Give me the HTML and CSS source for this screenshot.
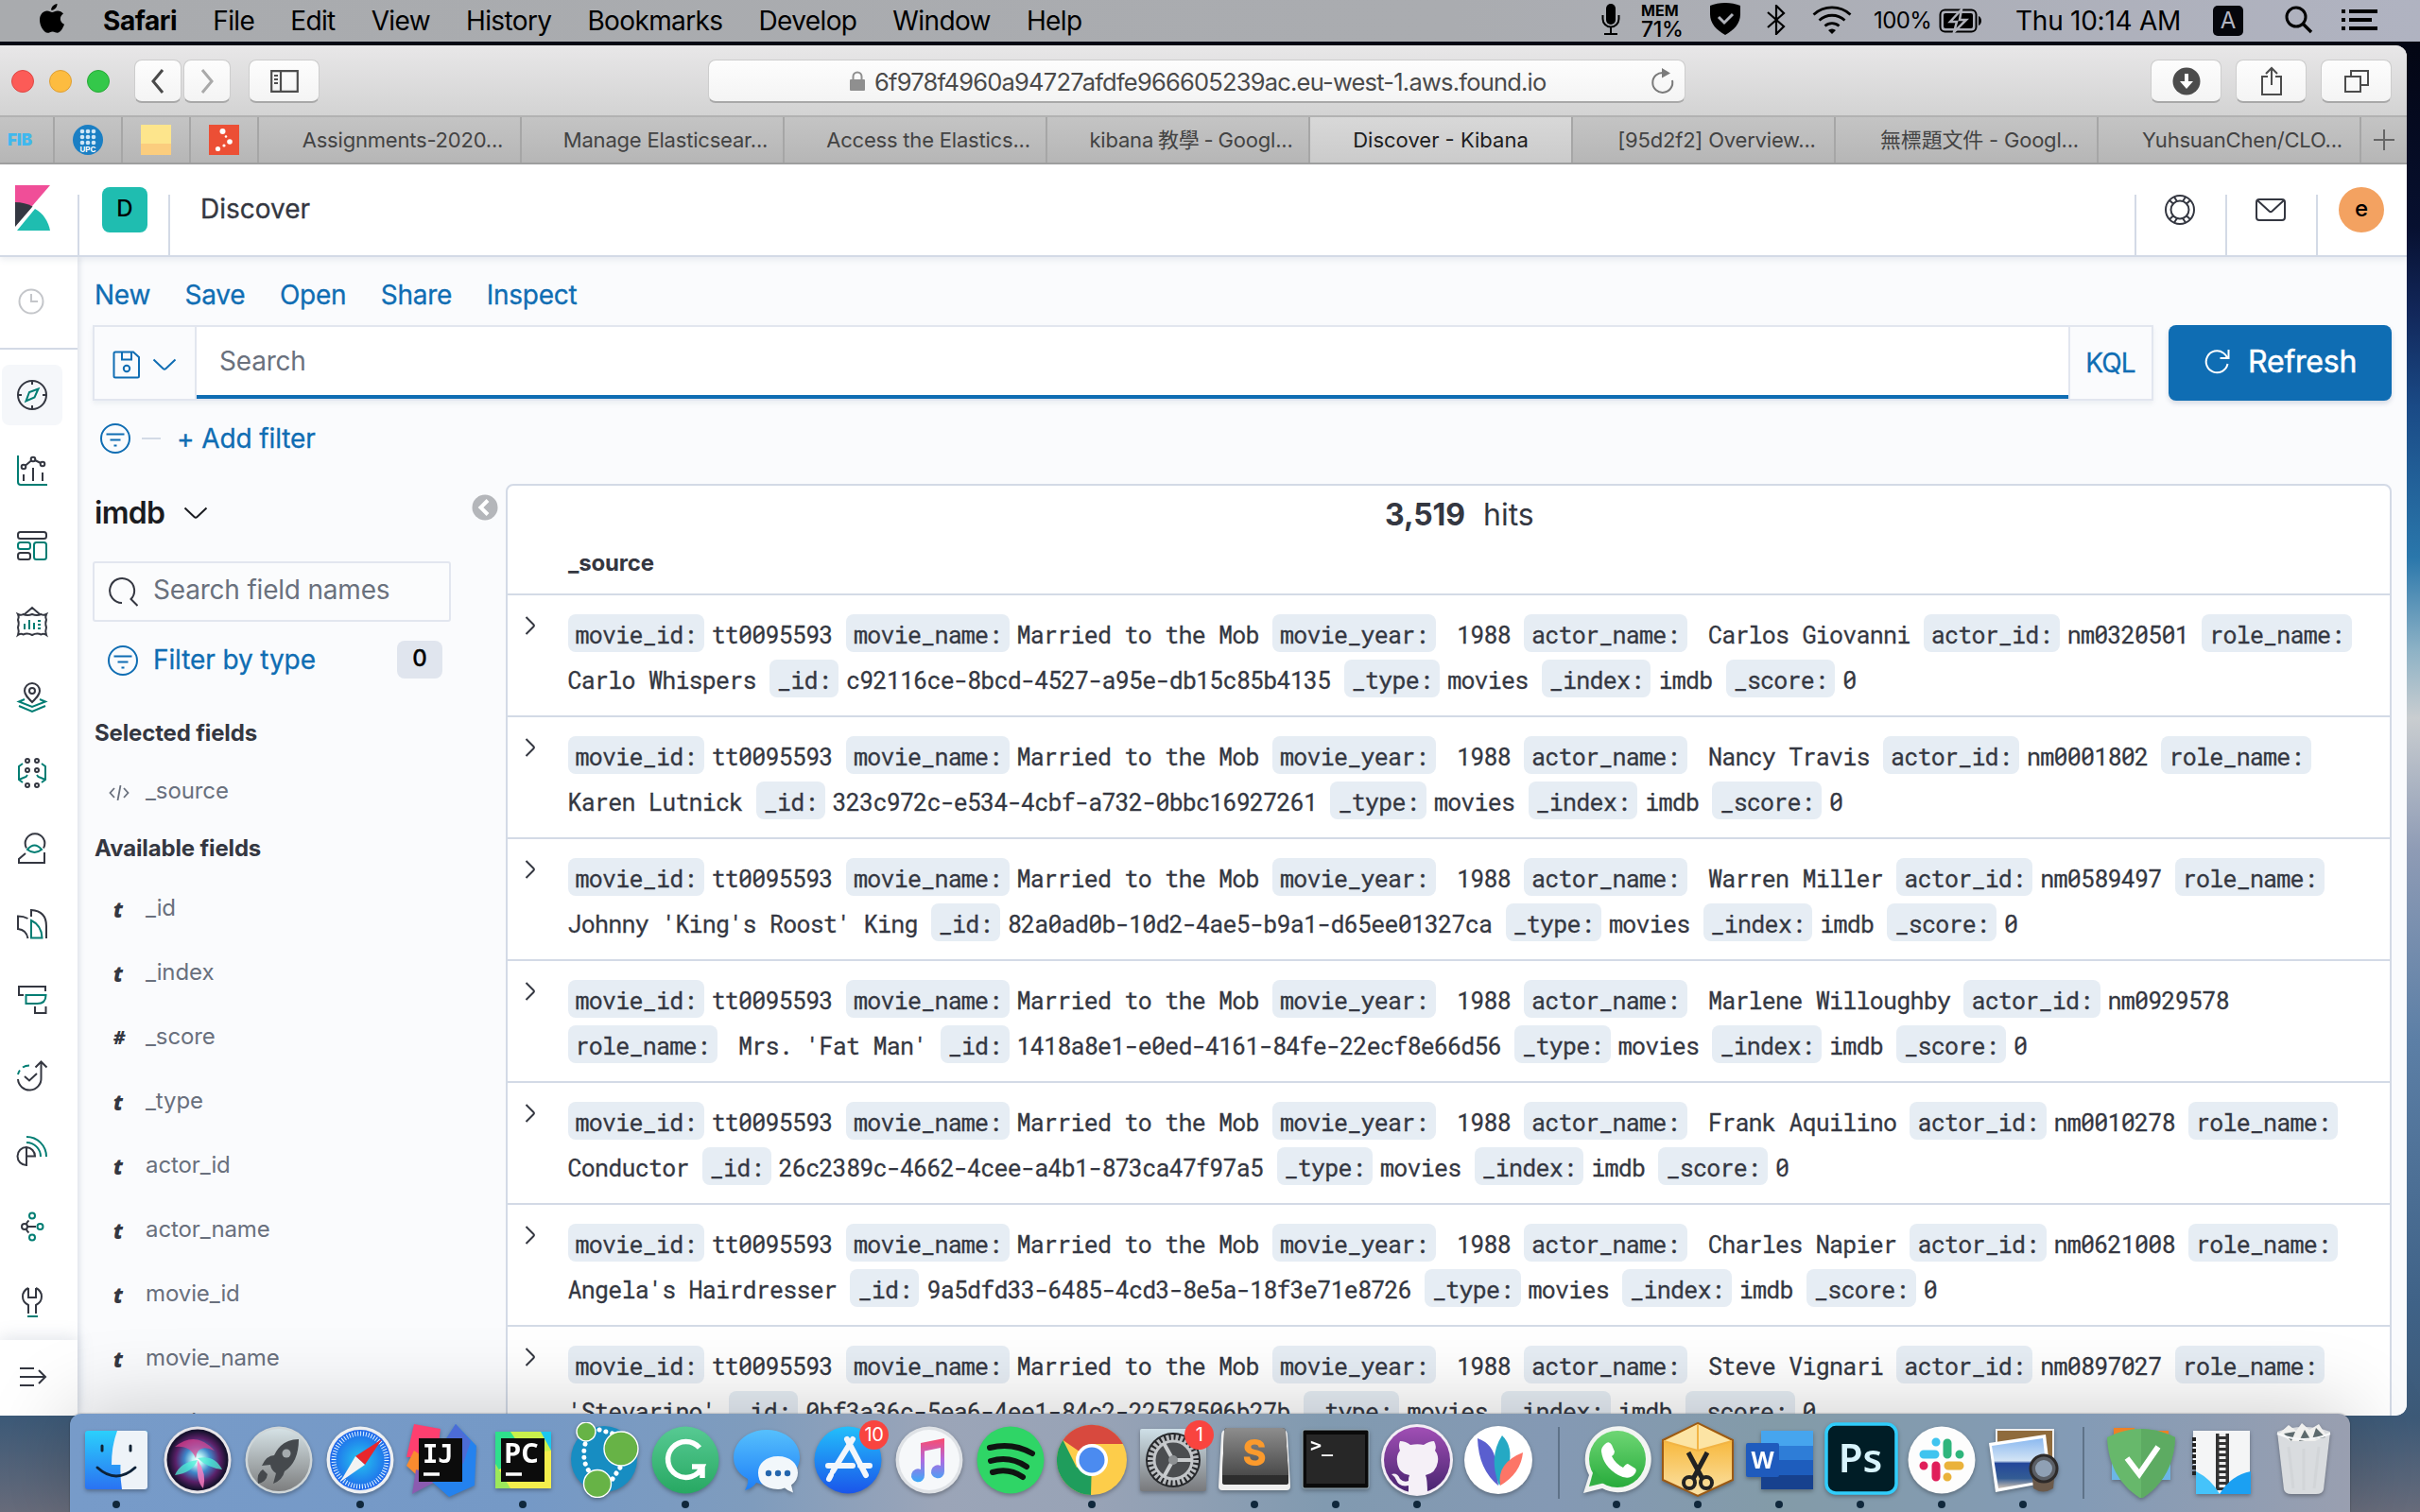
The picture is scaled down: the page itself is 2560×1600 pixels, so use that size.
FILE: index.html
```html
<!DOCTYPE html>
<html lang="en">
<head>
<meta charset="utf-8">
<title>Discover - Kibana</title>
<link rel="stylesheet" href="styles.css">
</head>
<body>
<svg width="0" height="0" class="defs">
  <defs>
    <symbol id="filter" viewBox="0 0 32 32"><g fill="none" stroke="currentColor" stroke-width="2"><circle cx="16" cy="16" r="15"/><path d="M6.500 11.500h19M10.500 17.500h11M14.500 23.500h3"/></g></symbol>
    <symbol id="down" viewBox="0 0 26 14"><path d="M1.500 1.500l10 9.500q1.500 1.200 3 0l10-9.500" fill="none" stroke="currentColor" stroke-width="2"/></symbol>
    <symbol id="right" viewBox="0 0 12 20"><path d="M1.500 1l8 8q1 1 0 2l-8 8" fill="none" stroke="currentColor" stroke-width="2"/></symbol>
    <linearGradient id="gFinder" x2="0" y2="1"><stop stop-color="#2bd0fc"/><stop offset="1" stop-color="#2a72f2"/></linearGradient>
    <radialGradient id="gSiri"><stop stop-color="#fff"/><stop offset=".18" stop-color="#b9f3f5"/><stop offset=".45" stop-color="#3f86c9"/><stop offset=".75" stop-color="#5a2068"/><stop offset="1" stop-color="#17122e"/></radialGradient>
    <linearGradient id="gRocket" x2="0" y2="1"><stop stop-color="#d5e1e5"/><stop offset="1" stop-color="#7d7e7f"/></linearGradient>
    <radialGradient id="gSafari"><stop stop-color="#25c6f0"/><stop offset="1" stop-color="#1f66ea"/></radialGradient>
    <linearGradient id="gGreen" x2="0" y2="1"><stop stop-color="#57ca93"/><stop offset="1" stop-color="#27a862"/></linearGradient>
    <linearGradient id="gMsg" x2="0" y2="1"><stop stop-color="#56c0fd"/><stop offset="1" stop-color="#1e7ff7"/></linearGradient>
    <linearGradient id="gStore" x2="0" y2="1"><stop stop-color="#23bffb"/><stop offset="1" stop-color="#1a55ea"/></linearGradient>
    <linearGradient id="gNote" x2="0" y2="1"><stop stop-color="#fb4a6c"/><stop offset=".5" stop-color="#b06ae0"/><stop offset="1" stop-color="#3aaaf8"/></linearGradient>
    <linearGradient id="gSteel" x2="0" y2="1"><stop stop-color="#cfe0e8"/><stop offset="1" stop-color="#78797c"/></linearGradient>
    <linearGradient id="gSub" x2="0" y2="1"><stop stop-color="#8d8d8d"/><stop offset="1" stop-color="#4b4b4b"/></linearGradient>
    <linearGradient id="gHub" x2="0" y2="1"><stop stop-color="#a14fb5"/><stop offset="1" stop-color="#47246f"/></linearGradient>
    <linearGradient id="gWa" x2="0" y2="1"><stop stop-color="#6ed674"/><stop offset="1" stop-color="#27ab3b"/></linearGradient>
    <linearGradient id="gBox" x2="0" y2="1"><stop stop-color="#f6ab1c"/><stop offset="1" stop-color="#fbe3a8"/></linearGradient>
    <linearGradient id="gSea" x2="0" y2="1"><stop stop-color="#8bb9f0"/><stop offset=".45" stop-color="#d3e4f5"/><stop offset=".5" stop-color="#24479a"/><stop offset=".8" stop-color="#335c94"/><stop offset="1" stop-color="#cfc2b5"/></linearGradient>
  </defs>
</svg>

<header class="menubar">
  <svg class="apple" width="28" height="32" viewBox="0 0 28 32"><path d="M19.500 0c.3 3.500-3 7-6.300 6.800C12.800 3.500 16.200.3 19.500 0zM14.200 9c1.500 0 3.300-1.600 6-1.500 2 .1 4.300 1 5.800 3-4.700 2.900-3.900 9.300 1 11.300-1 2.900-3.700 8.700-7 8.900-2 .1-3-1.300-5.400-1.300S11.200 30.800 9.400 30.800C5.400 30.700 1 23.300 1 17.200c0-6 3.900-9.500 7.800-9.600 2.300 0 4 1.400 5.400 1.400z"/></svg>
  <b class="app">Safari</b><span>File</span><span>Edit</span><span>View</span><span>History</span><span>Bookmarks</span><span>Develop</span><span>Window</span><span>Help</span>
  <div class="status">
    <svg width="20" height="34" viewBox="0 0 20 34"><rect x="5" y="0" width="10" height="22" rx="5"/><path d="M1.500 12v4a8.500 8.500 0 0 0 17 0v-4M10 25v6M3 32h14" fill="none" stroke="#000" stroke-width="2"/></svg>
    <div class="mem"><b>MEM</b><i>71%</i></div>
    <svg class="s-shield" width="34" height="34" viewBox="0 0 34 34"><path d="M17 0c6 0 11 1 16 3v9c0 10-7 17-16 22C8 29 1 22 1 12V3c5-2 10-3 16-3z"/><path d="M10 15l6 6 9-9" fill="none" stroke="#b0b2ba" stroke-width="3"/></svg>
    <svg class="s-bt" width="20" height="32" viewBox="0 0 20 32"><path d="M1 8l17 15-8 8V1l8 8L1 24" fill="none" stroke="#000" stroke-width="2.200"/></svg>
    <svg class="s-wifi" width="42" height="30" viewBox="0 0 42 30"><path d="M1.500 9.500a29 29 0 0 1 39 0M7.500 15.500a20 20 0 0 1 27 0M13.500 21.500a11 11 0 0 1 15 0" fill="none" stroke="#000" stroke-width="2.800"/><path d="M17 26a6 6 0 0 1 8 0l-4 4z"/></svg>
    <span class="s-pct">100%</span>
    <svg class="s-bat" width="46" height="26" viewBox="0 0 46 26"><rect x="1.500" y="1.500" width="38" height="23" rx="5" fill="none" stroke="#000" stroke-width="2"/><rect x="5" y="5" width="31" height="16" rx="2"/><path d="M42 8c4 1.500 4 8.500 0 10z"/><path d="M24 1L12 14h7l-3 11 13-13h-7z" stroke="#b0b2ba" stroke-width="2.500"/></svg>
    <span class="s-time">Thu 10:14 AM</span>
    <span class="s-input">A</span>
    <svg class="s-find" width="30" height="30" viewBox="0 0 30 30"><circle cx="12" cy="12" r="10" fill="none" stroke="#000" stroke-width="3"/><path d="M19 19l9 9" stroke="#000" stroke-width="3.400"/></svg>
    <svg class="s-list" width="38" height="22" viewBox="0 0 38 22"><path d="M0 2h4M8 2h30M0 11h4M8 11h24M0 20h4M8 20h30" stroke="#000" stroke-width="3.800"/></svg>
  </div>
</header>

<main class="window">
  <div class="toolbar">
    <i class="light red"></i><i class="light amber"></i><i class="light green"></i>
    <span class="btn back"><svg width="16" height="28" viewBox="0 0 16 28"><path d="M13 2L3 14l10 12" fill="none" stroke="#4a4a4a" stroke-width="3"/></svg></span>
    <span class="btn fwd"><svg width="16" height="28" viewBox="0 0 16 28"><path d="M3 2l10 12L3 26" fill="none" stroke="#a9a9a9" stroke-width="3"/></svg></span>
    <span class="btn side"><svg width="30" height="24" viewBox="0 0 30 24"><path d="M1.200 1.200h27.600v21.600H1.200zM11 1v22M4 6h4M4 10h4M4 14h4" fill="none" stroke="#4d4d4d" stroke-width="2.200"/></svg></span>
    <div class="url">
      <svg class="lock" width="18" height="22" viewBox="0 0 18 22"><rect x="1" y="9" width="16" height="12" rx="1" fill="#8f8f8f"/><path d="M4.500 10V6a4.500 4.500 0 0 1 9 0v4" fill="none" stroke="#8f8f8f" stroke-width="2"/></svg>
      <span class="addr">6f978f4960a94727afdfe966605239ac.eu-west-1.aws.found.io</span>
      <svg class="reload" width="26" height="28" viewBox="0 0 26 28"><path d="M23 13a10.500 10.500 0 1 1-9-8" fill="none" stroke="#7a7a7a" stroke-width="2"/><path d="M12 0l9 5.500-9 5z" fill="#7a7a7a"/></svg>
    </div>
    <span class="btn dl"><svg width="30" height="30" viewBox="0 0 30 30"><circle cx="15" cy="15" r="14.500" fill="#4c4c4c"/><path d="M13 7h4v8h5l-7 8-7-8h5z" fill="#fff"/></svg></span>
    <span class="btn"><svg width="24" height="32" viewBox="0 0 24 32"><path d="M8 11H2v19h20V11h-6M12 20V3M6 8l6-6 6 6" fill="none" stroke="#4c4c4c" stroke-width="2"/></svg></span>
    <span class="btn"><svg width="28" height="26" viewBox="0 0 28 26"><path d="M2 8h16v16H2zM8 8V2h18v15h-8" fill="none" stroke="#4c4c4c" stroke-width="2"/></svg></span>
  </div>

  <div class="tabs">
    <span class="pin p1">FIB</span>
    <span class="pin"><svg width="32" height="32" viewBox="0 0 32 32"><circle cx="16" cy="16" r="16" fill="#1b7fc4"/><g fill="#cfe6f6"><circle cx="10" cy="7" r="2.300"/><circle cx="16" cy="7" r="2.300"/><circle cx="22" cy="7" r="2.300"/><circle cx="10" cy="13" r="2.300"/><circle cx="16" cy="13" r="2.300"/><circle cx="22" cy="13" r="2.300"/><circle cx="10" cy="19" r="2.300"/><circle cx="16" cy="19" r="2.300"/><circle cx="22" cy="19" r="2.300"/></g><text x="16" y="29" class="upc">UPC</text></svg></span>
    <span class="pin"><svg width="32" height="32" viewBox="0 0 32 32"><path fill="#fde58c" d="M0 0h32v20H0z"/><path fill="#fbcd7e" d="M0 20h32v12H0z"/></svg></span>
    <span class="pin"><svg width="32" height="32" viewBox="0 0 32 32"><path fill="#ec4f35" d="M0 0h32v32H0z"/><g fill="#fff"><circle cx="14.500" cy="7" r="3"/><circle cx="18" cy="12.500" r="1.300"/><circle cx="22" cy="18" r="2.800"/><circle cx="16" cy="22" r="1.600"/><circle cx="9.500" cy="25.500" r="2.600"/></g></svg></span>
    <span class="tab">Assignments-2020...</span><span class="tab">Manage Elasticsear...</span><span class="tab">Access the Elastics...</span><span class="tab cjk">kibana 教學 - Googl...</span><span class="tab on">Discover - Kibana</span><span class="tab">[95d2f2] Overview...</span><span class="tab">無標題文件 - Googl...</span><span class="tab">YuhsuanChen/CLO...</span>
    <span class="plus"><svg width="22" height="22" viewBox="0 0 22 22"><path d="M11 0v22M0 11h22" stroke="#666" stroke-width="2"/></svg></span>
  </div>

  <div class="khead">
    <div class="logo"><svg width="38" height="48" viewBox="0 0 38 48"><path d="M0 0h37L0 43z" fill="#f04e98"/><path d="M0 18c7 0 13 1.500 18.500 4.500L0 44z" fill="#343741"/><path d="M21 25C30 30 35 38 37 48H2z" fill="#1fbdb0"/></svg></div>
    <div class="space"><span>D</span></div>
    <div class="crumb">Discover</div>
    <div class="hicon"><svg width="32" height="32" viewBox="0 0 32 32" fill="none" stroke="#343741" stroke-width="2"><circle cx="16" cy="16" r="15"/><circle cx="16" cy="16" r="9.500"/><path d="M10 2.500l3 4.500M5 6l4.500 4M22 2.500L19 7M27 6l-4.500 4M10 29.500l3-4.500M5 26l4.500-4M22 29.500L19 25M27 26l-4.500-4"/></svg></div>
    <div class="hicon"><svg width="32" height="24" viewBox="0 0 32 24" fill="none" stroke="#343741" stroke-width="2"><rect x="1" y="1" width="30" height="22" rx="3"/><path d="M2 2l12.500 11.500q1.500 1.300 3 0L30 2"/></svg></div>
    <div class="hicon user"><span>e</span></div>
  </div>

  <div class="app-body">
    <nav class="rail">
      <div class="recent"><svg width="28" height="28" viewBox="0 0 28 28" fill="none" stroke="#c4c6ca" stroke-width="2"><circle cx="14" cy="14" r="12.500"/><path d="M14 6v8h7"/></svg></div>
      <div class="links">
        <span class="on"><svg viewBox="0 0 32 32"><circle cx="16" cy="16" r="15"/><path d="M16 1v4M16 27v4M1 16h4M27 16h4"/><path class="t" d="M22.500 9.500l-4 9-9 4 3.500-9.500z"/></svg></span>
        <span><svg viewBox="0 0 32 32"><path class="t" d="M1 0v28q0 3 3 3h28"/><circle cx="7" cy="12" r="2.300"/><circle cx="17" cy="4" r="2.300"/><circle cx="27" cy="9" r="2.300"/><path d="M9 10.500l6-5M19 5l6 3M7 20v7M17 13v14M27 18v9"/></svg></span>
        <span><svg viewBox="0 0 32 32"><rect x="1" y="1" width="30" height="7" rx="2.500"/><rect class="t" x="1" y="12" width="13" height="7" rx="2.500"/><rect class="t" x="18" y="12" width="13" height="18" rx="2.500"/><rect x="1" y="23" width="13" height="7" rx="2.500"/></svg></span>
        <span><svg viewBox="0 0 32 32"><path d="M8 8l8-7 8 7M1 8q3 1.500 5.500 0 4.500 2 9.500 0 5 2 9.500 0Q28 9.500 31 8q-1.500 3 0 6-1.500 3 0 8-1.500 4 0 8-3-2-5.500-.5-4.500-2-9.500.5-5-2.500-9.500-.5Q4 28 1 30q1.500-4 0-8 1.500-5 0-8 1.500-3 0-6z"/><path class="t" d="M8 18v6M13 14v10M18 17v7M22 15h3M22 19h3M22 23h3"/></svg></span>
        <span><svg viewBox="0 0 32 32"><path d="M16 21C11 16 8 13 8 9a8 8 0 0 1 16 0c0 4-3 7-8 12z"/><circle cx="16" cy="9" r="3"/><path class="t" d="M8 18l-6 2.500L16 26l14-5.500-6-2.500M2 25l14 6 14-6"/></svg></span>
        <span><svg viewBox="0 0 32 32"><g><circle cx="11" cy="3" r="2"/><circle cx="21" cy="3" r="2"/><circle cx="11" cy="13" r="2"/><circle cx="21" cy="13" r="2"/><circle cx="11" cy="29" r="2"/><circle cx="21" cy="29" r="2"/></g><path class="t" d="M6 6L2 9v14l4 3M26 6l4 3v14l-4 3M2 23l7.500-3 1.500-2M30 23l-7.500-3-1.500-2"/></svg></span>
        <span><svg viewBox="0 0 32 32"><path d="M10 15.500A10.300 10.300 0 1 1 28 15.500M9 21l-7 6v4h27V20"/><path class="t" d="M11 17q7.500-9 15 0-7.500 6-15 0z"/></svg></span>
        <span><svg viewBox="0 0 32 32"><path d="M11.500 10Q7 7.500 1 7.500V21q9 1 10.500 10M15 8V1q16 1 16 17v13"/><path class="t" d="M15 12v18.500h11.500Q26 17 15 12z"/></svg></span>
        <span><svg viewBox="0 0 32 32"><path d="M7 11H2V2h28v5M19 23v7h11.500v-7"/><path class="t" d="M9.500 11h21q0 9-9 9h-12z"/></svg></span>
        <span><svg viewBox="0 0 32 32"><path d="M1 20a12.200 12.200 0 0 0 24.500-1.500V2M19.500 7.500l6-6 6 6M8 17l5 4.500 8-7.500"/><path class="t" d="M1 15q.5-2.500 2-4.500M6 7.500Q9 5.500 13 5.500"/></svg></span>
        <span><svg viewBox="0 0 32 32"><path d="M10 12a9.500 9.500 0 1 0 0 19V12a9.500 9.500 0 0 1 9 9.500H10"/><path class="t" d="M10 1a21 21 0 0 1 21 21M10 7a15 15 0 0 1 15 15"/></svg></span>
        <span><svg viewBox="0 0 32 32"><circle cx="8" cy="16" r="3"/><path d="M11 16h9M10 13.500q0-2 2.500-4M10 18.500q0 2 2.500 4"/><g class="t"><circle cx="16" cy="4.500" r="3"/><circle cx="24.500" cy="16" r="3"/><circle cx="16" cy="27.500" r="3"/></g></svg></span>
        <span><svg viewBox="0 0 32 32"><path d="M12 1Q6 4 6 10t6 9v9M20 1q6 3 6 9t-6 9v9M12 1v10h8V1"/><path class="t" d="M11 31h11"/></svg></span>
      </div>
      <div class="expand"><svg width="30" height="20" viewBox="0 0 30 20" fill="none" stroke="#343741" stroke-width="2"><path d="M1 1h15M1 10h27M1 19h15M21 3l7 7-7 7"/></svg></div>
    </nav>

    <section class="discover">
      <div class="actions"><span>New</span><span>Save</span><span>Open</span><span>Share</span><span>Inspect</span></div>
      <div class="query">
        <div class="field">
          <div class="saved">
            <svg width="30" height="30" viewBox="0 0 30 30" fill="none" stroke="currentColor" stroke-width="2"><path d="M1.500 3q0-1.500 1.500-1.500h19l6 5.500v20q0 1.500-1.500 1.500H3q-1.500 0-1.500-1.500zM10 2v7.500h10V2"/><circle cx="15" cy="19" r="3.200"/></svg>
            <svg width="26" height="14"><use href="#down"/></svg>
          </div>
          <div class="input">Search</div>
          <div class="kql">KQL</div>
        </div>
        <div class="refresh"><svg width="28" height="28" viewBox="0 0 28 28" fill="none" stroke="#fff" stroke-width="2"><path d="M24.500 16A11.500 11.500 0 1 1 20 4.500q3 2 4.500 5.500M25.500 1v9h-9"/></svg>Refresh</div>
      </div>
      <div class="filters"><svg width="32" height="32"><use href="#filter"/></svg><i></i><span>+ Add filter</span></div>

      <div class="cols">
        <aside class="side-fields">
          <div class="index"><b>imdb</b><svg width="26" height="14"><use href="#down"/></svg><svg class="fold" width="28" height="28" viewBox="0 0 28 28"><circle cx="14" cy="14" r="13.500" fill="#b4b6ba"/><path d="M17 6.500L9.500 14l7.500 7.500" fill="none" stroke="#fff" stroke-width="4"/></svg></div>
          <div class="fsearch"><svg width="32" height="32" viewBox="0 0 32 32" fill="none" stroke="#343741" stroke-width="2"><path d="M15 28a13 13 0 1 1 9.500-4L31.500 31"/></svg>Search field names</div>
          <div class="ftype"><svg width="32" height="32"><use href="#filter"/></svg>Filter by type<span>0</span></div>
          <h3>Selected fields</h3>
          <div class="fld sel"><svg width="22" height="16" viewBox="0 0 22 16" fill="none" stroke="#69707d" stroke-width="1.800"><path d="M6 3L1.500 8 6 13M16 3l4.500 5L16 13M12.500 0l-3 16"/></svg>_source</div>
          <h3 class="avail">Available fields</h3>
          <div class="fld"><i>t</i>_id</div>
          <div class="fld"><i>t</i>_index</div>
          <div class="fld"><i class="num">#</i>_score</div>
          <div class="fld"><i>t</i>_type</div>
          <div class="fld"><i>t</i>actor_id</div>
          <div class="fld"><i>t</i>actor_name</div>
          <div class="fld"><i>t</i>movie_id</div>
          <div class="fld"><i>t</i>movie_name</div>
          <div class="fld"><i>t</i>movie_year</div>
        </aside>

        <div class="results">
          <div class="hits"><b>3,519</b> hits</div>
          <div class="thead">_source</div>
          <div class="row"><svg width="12" height="20"><use href="#right"/></svg><div class="doc">
<p><b>movie_id:</b>tt0095593 <b>movie_name:</b>Married to the Mob <b>movie_year:</b> 1988 <b>actor_name:</b> Carlos Giovanni <b>actor_id:</b>nm0320501 <b>role_name:</b></p>
<p>Carlo Whispers <b>_id:</b>c92116ce-8bcd-4527-a95e-db15c85b4135 <b>_type:</b>movies <b>_index:</b>imdb <b>_score:</b>0</p></div></div>
          <div class="row"><svg width="12" height="20"><use href="#right"/></svg><div class="doc">
<p><b>movie_id:</b>tt0095593 <b>movie_name:</b>Married to the Mob <b>movie_year:</b> 1988 <b>actor_name:</b> Nancy Travis <b>actor_id:</b>nm0001802 <b>role_name:</b></p>
<p>Karen Lutnick <b>_id:</b>323c972c-e534-4cbf-a732-0bbc16927261 <b>_type:</b>movies <b>_index:</b>imdb <b>_score:</b>0</p></div></div>
          <div class="row"><svg width="12" height="20"><use href="#right"/></svg><div class="doc">
<p><b>movie_id:</b>tt0095593 <b>movie_name:</b>Married to the Mob <b>movie_year:</b> 1988 <b>actor_name:</b> Warren Miller <b>actor_id:</b>nm0589497 <b>role_name:</b></p>
<p>Johnny 'King's Roost' King <b>_id:</b>82a0ad0b-10d2-4ae5-b9a1-d65ee01327ca <b>_type:</b>movies <b>_index:</b>imdb <b>_score:</b>0</p></div></div>
          <div class="row"><svg width="12" height="20"><use href="#right"/></svg><div class="doc">
<p><b>movie_id:</b>tt0095593 <b>movie_name:</b>Married to the Mob <b>movie_year:</b> 1988 <b>actor_name:</b> Marlene Willoughby <b>actor_id:</b>nm0929578</p>
<p><b>role_name:</b> Mrs. 'Fat Man' <b>_id:</b>1418a8e1-e0ed-4161-84fe-22ecf8e66d56 <b>_type:</b>movies <b>_index:</b>imdb <b>_score:</b>0</p></div></div>
          <div class="row"><svg width="12" height="20"><use href="#right"/></svg><div class="doc">
<p><b>movie_id:</b>tt0095593 <b>movie_name:</b>Married to the Mob <b>movie_year:</b> 1988 <b>actor_name:</b> Frank Aquilino <b>actor_id:</b>nm0010278 <b>role_name:</b></p>
<p>Conductor <b>_id:</b>26c2389c-4662-4cee-a4b1-873ca47f97a5 <b>_type:</b>movies <b>_index:</b>imdb <b>_score:</b>0</p></div></div>
          <div class="row"><svg width="12" height="20"><use href="#right"/></svg><div class="doc">
<p><b>movie_id:</b>tt0095593 <b>movie_name:</b>Married to the Mob <b>movie_year:</b> 1988 <b>actor_name:</b> Charles Napier <b>actor_id:</b>nm0621008 <b>role_name:</b></p>
<p>Angela's Hairdresser <b>_id:</b>9a5dfd33-6485-4cd3-8e5a-18f3e71e8726 <b>_type:</b>movies <b>_index:</b>imdb <b>_score:</b>0</p></div></div>
          <div class="row"><svg width="12" height="20"><use href="#right"/></svg><div class="doc">
<p><b>movie_id:</b>tt0095593 <b>movie_name:</b>Married to the Mob <b>movie_year:</b> 1988 <b>actor_name:</b> Steve Vignari <b>actor_id:</b>nm0897027 <b>role_name:</b></p>
<p>'Stevarino' <b>_id:</b>0bf3a36c-5ea6-4ee1-84c2-22578506b27b <b>_type:</b>movies <b>_index:</b>imdb <b>_score:</b>0</p></div></div>
        </div>
      </div>
    </section>
  </div>
</main>

<footer class="dock">
  <span class="run"><svg viewBox="0 0 86 80"><rect x="10" y="9" width="66" height="62" rx="3" fill="url(#gFinder)"/><path d="M44 9h29a3 3 0 0 1 3 3v56a3 3 0 0 1-3 3H49q-2-12-1.500-26H38Q38 25 44 9z" fill="#eef3f8"/><path d="M28 25v5M58 25v5" stroke="#123" stroke-width="3" stroke-linecap="round"/><path d="M23 48q20 18 40 0" fill="none" stroke="#0d2238" stroke-width="3" stroke-linecap="round"/></svg></span>
  <span><svg viewBox="0 0 86 80"><circle cx="43" cy="40" r="35.500" fill="#e8e6ea"/><circle cx="43" cy="40" r="32.500" fill="#17122e"/><circle cx="43" cy="40" r="31" fill="url(#gSiri)"/><path d="M19 26q22-18 42 4-18-8-20 8-6-14-22-12z" fill="#e0408f" opacity=".7"/><path d="M43 38q18-4 26 12-16-2-26-12zM43 40q-6 14-24 16 6-14 24-16z" fill="#4df0d6" opacity=".75"/><path d="M43 40q10 14 6 30-8-8-6-30z" fill="#ff7fc2" opacity=".8"/></svg></span>
  <span><svg viewBox="0 0 86 80"><circle cx="43" cy="40" r="35.500" fill="#cfd6d8"/><circle cx="43" cy="40" r="33" fill="url(#gRocket)"/><path d="M64 18q-18 0-26 17-8 0-13 11l9-1q1 6 6 9l-3 11q10-4 12-13 15-10 15-34zM26 50q-7 4-5 15 9-2 10-10z" fill="#45494d"/><circle cx="51" cy="33" r="4.500" fill="#a5abae"/></svg></span>
  <span class="run"><svg viewBox="0 0 86 80"><circle cx="43" cy="40" r="35.500" fill="#eef0f2"/><circle cx="43" cy="40" r="32" fill="url(#gSafari)"/><circle cx="43" cy="40" r="28" fill="none" stroke="#e5f4ff" stroke-width="5" stroke-dasharray="1 1.930"/><path d="M66 18L48 45l-10-9z" fill="#e8262c"/><path d="M22 63l16-27 10 9z" fill="#f3f3f3"/></svg></span>
  <span><svg viewBox="0 0 86 80"><path d="M14 2l28 5-4 30H6z" fill="#fe3f6f"/><path d="M6 46l8-16 20 14-14 15z" fill="#f98b2f"/><path d="M12 76l4-26 30 8z" fill="#8b5bb0"/><path d="M40 30L58 2l22 23-2 42-27 12-18-16z" fill="#2482ee"/><path d="M44 24L58 2l16 18-8 24z" fill="#4c6cd6"/><rect x="19" y="17" width="46" height="46" fill="#0c0c0c"/><text x="23" y="43" class="jb">IJ</text><path d="M24 55h17" stroke="#fff" stroke-width="3.500"/></svg></span>
  <span class="run"><svg viewBox="0 0 86 80"><rect x="14" y="10" width="59" height="60" fill="#2fe08c"/><path d="M30 10h43v20L50 40z" fill="#c9f04b"/><path d="M62 10h11v20z" fill="#1bc7f0"/><path d="M73 30v40H14V52l40-20z" fill="#f3ee4c"/><path d="M14 44v26h16z" fill="#9ce85a"/><rect x="20" y="17" width="46" height="46" fill="#0c0c0c"/><text x="23" y="43" class="jb pc">PC</text><path d="M25 55h17" stroke="#fff" stroke-width="3.500"/></svg></span>
  <span><svg viewBox="0 0 86 80"><circle cx="43" cy="39" r="35" fill="#178dc2"/><path d="M23 23q-5 22 9 34M38 8l14 4M52 60l8-12" stroke="#fff" stroke-width="5" stroke-linecap="round" stroke-dasharray=".1 7" fill="none"/><g fill="#67b346" stroke="#fff" stroke-width="1.400"><circle cx="24" cy="10" r="10"/><circle cx="61" cy="28" r="18"/><circle cx="36" cy="65" r="14.500"/></g></svg></span>
  <span class="run"><svg viewBox="0 0 86 80"><circle cx="43" cy="40" r="35.500" fill="url(#gGreen)"/><path d="M58 27a19 19 0 1 0 3 20H50M61 47v12" fill="none" stroke="#fff" stroke-width="5.500"/></svg></span>
  <span><svg viewBox="0 0 86 80"><path d="M43 8c20 0 35 13 35 29S63 66 43 66q-6 0-11-2-4 6-12 8 4-7 3-12Q8 52 8 37C8 21 23 8 43 8z" fill="url(#gMsg)"/><path d="M55 36c13 0 21 8 21 17.500q0 8-7 13l2 8q-6-2-9-5-4 1.500-7 1.500-21-1-21-17.500C34 44 42 36 55 36z" fill="#f2f7fb"/><g fill="#2566ad"><circle cx="45" cy="54" r="3.200"/><circle cx="55" cy="54" r="3.200"/><circle cx="65" cy="54" r="3.200"/></g></svg></span>
  <span><svg viewBox="0 0 86 80"><circle cx="43" cy="40" r="35.500" fill="url(#gStore)"/><path d="M42 18l20 38M48 18L27 52M22 46h26M56 46h10M25 56l-2 4" stroke="#f2f6fb" stroke-width="6" stroke-linecap="round"/></svg><em>10</em></span>
  <span><svg viewBox="0 0 86 80"><circle cx="43" cy="40" r="35.500" fill="#dfe2e6"/><circle cx="43" cy="40" r="32" fill="#f6f8fa"/><path d="M34 22l25-5v35a7 7 0 1 1-4-6V27l-17 3.500V56a7 7 0 1 1-4-6z" fill="url(#gNote)"/></svg></span>
  <span><svg viewBox="0 0 86 80"><circle cx="43" cy="40" r="35.500" fill="#2fd566"/><path d="M21 27q24-6 45 6M22 41q20-6 38 6M24 53q17-5 32 5" fill="none" stroke="#0f1411" stroke-width="6" stroke-linecap="round"/></svg></span>
  <span class="run"><svg viewBox="0 0 86 80"><circle cx="43" cy="40" r="37" fill="#fdcd4a"/><path d="M43 40L12.500 19A37 37 0 0 1 76 23H43z" fill="#d8493e"/><path d="M43 40l-1 37A37 37 0 0 1 12.500 19L27 48z" fill="#1f9d5c"/><path d="M43 23h33L60 46 42 77l17-29z" fill="#fdcd4a"/><circle cx="43" cy="40" r="17" fill="#fff"/><circle cx="43" cy="40" r="13.500" fill="#4b8bf0"/></svg></span>
  <span><svg viewBox="0 0 86 80"><rect x="8" y="7" width="70" height="66" rx="2" fill="url(#gSteel)"/><circle cx="43" cy="40" r="29" fill="#26282b"/><circle cx="43" cy="40" r="24" fill="none" stroke="#b9bcbf" stroke-width="6" stroke-dasharray="3 2"/><circle cx="43" cy="40" r="20" fill="#4b4d50" stroke="#c3c6c9" stroke-width="3"/><path d="M43 40h20M43 40L33 22M43 40L33 58" stroke="#c9ccce" stroke-width="4"/><circle cx="43" cy="40" r="5" fill="#8d9093"/></svg><em>1</em></span>
  <span class="run"><svg viewBox="0 0 86 80"><path d="M8 14q0-6 5-6h60q5 0 5 6l3 54q0 4-4 4H9q-4 0-4-4z" fill="#efefef"/><path d="M14 6h58q4 0 4 4l3 46v8q0 2-3 2H12q-3 0-3-2v-8l2-46q0-4 3-4z" fill="#2d2d2d"/><path d="M14 6h58q4 0 4 4l3 46H9l2-46q0-4 3-4z" fill="url(#gSub)"/><text x="43" y="46" class="sub">S</text></svg></span>
  <span class="run"><svg viewBox="0 0 86 80"><rect x="8" y="8" width="70" height="62" rx="2" fill="#0a0a0a" stroke="#9fb3bd" stroke-width="1"/><rect x="12" y="13" width="62" height="52" fill="#272727"/><text x="16" y="31" class="term">&gt;_</text></svg></span>
  <span class="run"><svg viewBox="0 0 86 80"><circle cx="43" cy="40" r="38" fill="#f3eef5"/><circle cx="43" cy="40" r="35" fill="url(#gHub)"/><path d="M25 20q6 0 11 4 8-1.500 14 0 6-4 11-4 3 6 1 10 4 5 3 12-2 12-13 14 2 4 2 20H34v-9q-10 2-13-6-2-4-5-6 6-2 9 5 4 4 9 2 0-4 1-6-12-2-13-14-1-7 3-12-2-5 0-10z" fill="#f5f0f7"/></svg></span>
  <span><svg viewBox="0 0 86 80"><circle cx="43" cy="40" r="36" fill="#fff"/><path d="M21 17q17 6 19 24l3 26Q22 50 21 17z" fill="#5a5fcf"/><path d="M47 14q12 12 7 32l-10 21q-12-30 3-53z" fill="#25a9c4"/><path d="M69 32q-2 22-24 35-4-24 24-35z" fill="#fd7567"/></svg></span>
  <i class="sep"></i>
  <span class="run"><svg viewBox="0 0 86 80"><path d="M8 75l6-19A35 35 0 1 1 28 70z" fill="#f2f4f2"/><circle cx="44" cy="39" r="30" fill="url(#gWa)"/><path d="M14 68l5-18 12 14z" fill="#34b045"/><path d="M31 23q4-4 7 1l3 7q0 3-3 5 4 8 12 12 3-4 5-4l8 5q2 2-1 6-6 7-17 1-16-9-18-25-.5-4 4-8z" fill="#fff"/></svg></span>
  <span class="run"><svg viewBox="0 0 86 80"><path d="M43 1l37 18v42L43 78 6 61V19z" fill="url(#gBox)" stroke="#9c5a14" stroke-width="2"/><path d="M43 2l36 18-36 10L7 20z" fill="#fce4a4"/><path d="M7 20l36 10 36-10M43 2v28" stroke="#f2b445" stroke-width="2" fill="none"/><path d="M33 32l15 28M53 32L38 60" stroke="#222" stroke-width="5"/><circle cx="34" cy="64" r="6" fill="none" stroke="#222" stroke-width="4"/><circle cx="52" cy="64" r="6" fill="none" stroke="#222" stroke-width="4"/></svg></span>
  <span class="run"><svg viewBox="0 0 86 80"><path fill="#46a5ee" d="M24 9h55v16H24z"/><path fill="#2e7dd7" d="M24 25h55v15H24z"/><path fill="#1e5dbd" d="M24 40h55v16H24z"/><path fill="#17418e" d="M24 56h55v15H24z"/><rect x="8" y="22" width="35" height="36" rx="2" fill="#1f5bbd"/><text x="25.500" y="49" class="word">W</text></svg></span>
  <span class="run"><svg viewBox="0 0 86 80"><rect x="7" y="2" width="74" height="73" rx="10" fill="#001d26" stroke="#30cdfb" stroke-width="3.500"/><text x="43" y="53" class="ps">Ps</text></svg></span>
  <span class="run"><svg viewBox="0 0 86 80"><circle cx="43" cy="40" r="35.500" fill="#fdfdfd"/><g stroke-width="9" stroke-linecap="round"><path d="M24 34h12M37 21v.1" stroke="#40c4ef"/><path d="M49 22v12M62 34v.1" stroke="#2fb57c"/><path d="M50 46h12M49 58v.1" stroke="#eab23b"/><path d="M37 46v12M24 46v.1" stroke="#e01e5a"/></g></svg></span>
  <span class="run"><svg viewBox="0 0 86 80"><rect x="15" y="8" width="60" height="44" fill="#8f6b3c" stroke="#eee" stroke-width="2"/><path d="M7 22l60-9 6 50-59 11z" fill="#fff"/><path d="M10 25l54-8 5 44-52 9z" fill="url(#gSea)"/><path d="M52 50l2 20q10 7 21 0l2-20z" fill="#6b5a4b"/><circle cx="65" cy="49" r="14" fill="#5b5f66" stroke="#2d2a29" stroke-width="3"/><circle cx="65" cy="49" r="9" fill="#8fa0b4"/></svg></span>
  <i class="sep"></i>
  <span><svg viewBox="0 0 86 80"><path d="M14 6h22v10H14zM60 9h12v10H60z" fill="#ee8125"/><path d="M12 30h62v31H12z" fill="#6bb6e6"/><path d="M43 7c11 0 24 3 36 9-1 28-12 50-36 65C19 66 8 44 7 16 19 10 32 7 43 7z" fill="#67b86b"/><path d="M43 7c11 0 24 3 36 9-1 28-12 50-36 65z" fill="#5dab62"/><path d="M28 38l13 17 20-29" fill="none" stroke="#fff" stroke-width="6"/></svg></span>
  <span><svg viewBox="0 0 86 80"><path d="M12 9h60v67H15V45h-3z" fill="#f4f5f6"/><path d="M13 16v40" stroke="#222" stroke-width="4" stroke-dasharray="4 2"/><path d="M43 12v60" stroke="#333" stroke-width="14"/><path d="M43 12v60" stroke="#eee" stroke-width="7" stroke-dasharray="3 3"/><path d="M15 52q16 8 25 24H15z" fill="#45c3fa"/><path d="M73 52Q52 56 40 76h33z" fill="#1ba0f2"/></svg></span>
  <span><svg viewBox="0 0 86 80"><path d="M15 10q28-10 56 0l-7 61q-1 5-8 5H30q-7 0-8-5z" fill="#d9dcdf"/><path d="M17 12l10-9 8 6 6-8 8 7 10-6 8 12-12 6H29z" fill="#f0f0ee"/><path d="M22 12l8 8 4-10zM44 8l-6 12 12-2zM56 6l-4 12 14-2z" fill="#5d6a6d"/><path d="M15 12q28 12 56 0" fill="none" stroke="#f7f8f9" stroke-width="2"/><path d="M27 26l5 44M43 28v44M59 26l-5 44" stroke="#d2d5d8" stroke-width="3"/></svg></span>
</footer>
</body>
</html>
```
FILE: styles.css
```css
* { box-sizing: border-box; }
body {
  margin: 0; width: 2560px; height: 1600px; overflow: hidden; position: relative;
  font-family: Inter, "Noto Sans CJK TC", sans-serif; font-size: 28px; color: #343741;
  background: linear-gradient(180deg, #02030c 0, #071030 240px, #12275a 330px, #1a4a86 430px, #2a77ab 590px, #8fb3c6 690px, #c9cdd0 760px, #8e9bb5 900px, #5c7fa6 1100px, #3f6287 1380px, #3d5a78 1500px, #686c7b 1600px);
}
svg { display: block; flex: none; }
.defs { position: absolute; }

/* menu bar */
.menubar { height: 44px; display: flex; align-items: center; background: linear-gradient(90deg, #a9abae, #aaacb0 60%, #b0b3c1); color: #000; padding: 0 45px 0 41px; line-height: 44px; }
.apple { margin: -5px 40px 0 0; }
.menubar > span, .menubar > b { margin-right: 38px; letter-spacing: -.62px; }
.menubar > .app { font-weight: 700; letter-spacing: -.4px; margin-right: 38px; }
.status { margin-left: auto; display: flex; align-items: center; }
.status svg { margin-top: -3px; }
.mem { margin-left: 22px; width: 50px; height: 38px; display: flex; flex-direction: column; }
.mem b { font: 700 16px/16px Inter; letter-spacing: 0; }
.mem i { font: 500 23px/24px Inter; letter-spacing: -.3px; }
.status .s-shield { margin-left: 22px; margin-top: -5px; margin-right: -1px; }
.s-bt { margin-left: 28px; }
.s-wifi { margin-left: 28px; }
.s-pct { font-size: 24px; margin-left: 23px; width: 60px; letter-spacing: -.6px; white-space: nowrap; }
.status .s-bat { margin-left: 9px; margin-top: 0; }
.s-time { margin-left: 35px; width: 175px; letter-spacing: -.25px; white-space: nowrap; }
.s-input { margin-left: 34px; width: 32px; height: 32px; border-radius: 5px; background: #05060c; color: #b3b5c2; font-size: 24px; line-height: 32px; text-align: center; }
.s-find { margin-left: 44px; }
.s-list { margin-left: 30px; }

/* browser window */
.window { margin-top: 4px; width: 2546px; height: 1450px; border-radius: 0 12px 12px 0; overflow: hidden; background: #fff; display: flex; flex-direction: column; }
.toolbar { height: 76px; flex: none; display: flex; align-items: center; padding: 2px 16px 0 12px; background: linear-gradient(#e8e7e8, #d3d3d3); border-bottom: 2px solid #b2b2b2; }
.light { width: 24px; height: 24px; border-radius: 50%; margin-right: 16px; }
.red { background: #fc5b57; border: 1px solid #df4744; }
.amber { background: #fdbc40; border: 1px solid #de9f34; }
.green { background: #34c84a; border: 1px solid #27aa35; }
.btn { width: 75px; height: 46px; margin-left: 15px; border-radius: 8px; background: linear-gradient(#fdfdfd, #f4f4f4); border: 1px solid #cdcdcd; border-bottom: 2px solid #a9a9a9; display: flex; align-items: center; justify-content: center; }
.back, .fwd { width: 50px; }
.back { margin-left: 10px; }
.fwd { margin-left: 2px; }
.side { margin-left: 19px; }
.url { margin-left: 411px; width: 1034px; height: 46px; border-radius: 8px; background: linear-gradient(#fdfdfd, #f4f4f4); border: 1px solid #cdcdcd; border-bottom: 2px solid #a9a9a9; display: flex; align-items: center; padding-left: 148px; font-size: 25.500px; color: #4a4a4a; }
.addr { margin-left: 9px; width: 711px; white-space: nowrap; letter-spacing: -.79px; padding-top: 2px; }
.reload { margin-left: 110px; }
.dl { margin-left: auto; }

.tabs { height: 50px; flex: none; display: flex; align-items: stretch; background: linear-gradient(#c4c4c4, #b6b6b6); border-bottom: 2px solid #a0a0a0; font-size: 22px; color: #434343; }
.pin { width: 72px; border-right: 2px solid #a6a6a6; display: flex; align-items: center; justify-content: center; }
.p1 { width: 58px; padding-right: 14px; color: #3fb8ee; font-weight: 900; font-size: 17px; }
.upc { font: 700 8px Inter; fill: #fff; text-anchor: middle; }
.tab { width: 278px; border-right: 2px solid #a6a6a6; padding-left: 28px; line-height: 49px; text-align: center; white-space: nowrap; letter-spacing: -.2px; }
.tab.cjk { word-spacing: -1px; }
.tab.on { background: linear-gradient(#d8d8d8, #cbcbcb); color: #1d1d1d; padding-left: 0; letter-spacing: 0; }
.plus { flex: 1; display: flex; align-items: center; justify-content: center; }

/* kibana header */
.khead { height: 98px; flex: none; display: flex; border-bottom: 2px solid #d3dae6; background: #fff; position: relative; z-index: 2; box-shadow: 0 3px 6px rgba(105, 120, 150, .12); }
.logo { width: 82px; padding: 22px 0 0 16px; }
.space { width: 98px; margin-top: 32px; border: solid #d3dae6; border-width: 0 2px; padding-left: 24px; }
.space span { display: block; width: 48px; height: 48px; margin-top: -8px; border-radius: 8px; background: #1fbdb0; color: #000; font: 500 24px/46px Inter; text-align: center; }
.crumb { flex: 1; padding-left: 32px; line-height: 94px; -webkit-text-stroke: .3px; }
.hicon { width: 96px; margin-top: 32px; height: 64px; border-left: 2px solid #d3dae6; display: flex; justify-content: center; align-items: flex-start; padding-right: 2px; }
.hicon svg[height="24"] { margin-top: 4px; }
.user { width: 96px; justify-content: flex-start; padding-left: 22px; }
.user span { width: 48px; height: 48px; border-radius: 50%; background: #f3a261; margin-top: -8px; font: 500 24px/46px Inter; color: #000; text-align: center; }

.app-body { flex: 1; display: flex; min-height: 0; }
.rail { width: 82px; flex: none; display: flex; flex-direction: column; background: #fff; box-shadow: 2px 0 6px rgba(105, 120, 150, .2); position: relative; z-index: 1; }
.recent { height: 98px; flex: none; border-bottom: 2px solid #d3dae6; padding: 33px 0 0 19px; }
.links { padding: 16px 0 0 2px; flex: 1; min-height: 0; }
.links span { width: 64px; height: 64px; margin-bottom: 16px; border-radius: 8px; display: flex; align-items: center; justify-content: center; }
.links .on { background: #f5f7fa; }
.links svg { width: 32px; height: 32px; fill: none; stroke: #343741; stroke-width: 2; overflow: visible; }
.links .t { stroke: #017d73; }
.expand { height: 80px; flex: none; padding: 29px 0 0 20px; background: #fff; box-shadow: 0 -4px 16px rgba(105, 120, 150, .18); position: relative; }

.discover { flex: 1; min-width: 0; background: #fafbfd; padding: 0 16px; display: flex; flex-direction: column; }
.actions { height: 72px; flex: none; padding: 20px 0 0 2px; line-height: 40px; display: flex; gap: 36.500px; color: #0f6db3; letter-spacing: -.25px; -webkit-text-stroke: .3px; }
.query { display: flex; gap: 16px; height: 80px; flex: none; }
.field { width: 2180px; border: 2px solid #e2e6ef; display: flex; box-shadow: 0 3px 5px rgba(120, 135, 160, .1); }
.saved { width: 108px; border-right: 2px solid #e2e6ef; display: flex; align-items: center; gap: 12px; padding: 4px 0 0 19px; color: #0f6db3; }
.input { flex: 1; background: #fff; border-bottom: 4px solid #0f6db3; padding-left: 24px; line-height: 72px; color: #6a717d; letter-spacing: -.2px; }
.kql { width: 88px; border-left: 2px solid #e2e6ef; text-align: center; line-height: 76px; color: #0f6db3; letter-spacing: -.9px; padding-right: 1px; -webkit-text-stroke: .3px; }
.refresh { width: 236px; border-radius: 8px; background: #0f6db3; color: #fff; font-size: 32px; display: flex; align-items: center; padding: 0 0 3px 38px; gap: 18px; box-shadow: 0 3px 5px rgba(70, 90, 130, .2); letter-spacing: -.2px; -webkit-text-stroke: .5px; }
.filters { height: 80px; flex: none; display: flex; align-items: center; padding-left: 8px; color: #0f6db3; letter-spacing: -.1px; -webkit-text-stroke: .3px; }
.filters i { width: 20px; height: 2px; background: #d3dae6; margin: 0 17px 0 12px; }

.cols { display: flex; margin-top: 8px; flex: 1; min-height: 0; }
.side-fields { width: 437px; flex: none; }
.index { height: 62px; display: flex; align-items: center; padding: 0 0 1px 2px; color: #1a1c21; }
.index b { font-size: 32px; font-weight: 600; width: 94px; letter-spacing: -.7px; }
.fold { margin: -12px 8px 0 auto; }
.fsearch { margin-top: 20px; width: 379px; height: 64px; border: 2px solid #e2e6ef; border-radius: 3px; background: #fbfcfd; display: flex; align-items: center; gap: 16px; padding: 0 0 4px 14px; color: #6a717d; letter-spacing: -.2px; }
.fsearch svg { margin-top: 4px; }
.ftype { width: 370px; height: 80px; display: flex; align-items: center; gap: 16px; padding: 0 0 1px 16px; color: #0f6db3; letter-spacing: -.1px; -webkit-text-stroke: .3px; }
.ftype svg { margin-top: 2px; }
.ftype span { margin-left: auto; width: 48px; height: 40px; border-radius: 8px; background: #e0e5ee; color: #000; font: 500 24px/38px Inter; text-align: center; }
h3 { margin: 0; height: 74px; padding-left: 2px; font: 700 24px/76px Inter; letter-spacing: -.15px; }
.avail { height: 66px; }
.fld { height: 68px; display: flex; align-items: center; font-size: 24px; color: #69707d; letter-spacing: -.1px; }
.fld.sel { height: 48px; padding-left: 17px; gap: 17px; }
.fld.sel svg { margin-top: 6px; }
.fld i { width: 56px; padding: 4px 0 0 22px; font: italic 800 22px "Open Sans"; color: #343741; }
.fld i.num { font-size: 19px; }

.results { flex: 1; min-width: 0; background: #fff; border: 2px solid #d3dae6; border-radius: 8px 8px 0 0; overflow: hidden; height: 1100px; }
.hits { height: 62px; line-height: 62px; font-size: 32px; padding-left: 928px; word-spacing: 10px; }
.hits b { letter-spacing: -.1px; }
.thead { height: 54px; line-height: 39px; border-bottom: 2px solid #d3dae6; padding-left: 64px; font-weight: 700; font-size: 24px; letter-spacing: -.2px; }
.row { height: 129px; border-bottom: 2px solid #d3dae6; display: flex; padding: 16px 0 0 18px; }
.row > svg { margin-top: 6px; }
.doc { margin-left: 33.500px; font: 25px "Roboto Mono", "Liberation Mono", monospace; letter-spacing: -.767px; white-space: pre; display: flex; flex-direction: column; -webkit-text-stroke: .3px; }
.doc p { margin: 0; height: 48px; line-height: 52px; }
.doc b { display: inline-block; font-weight: 400; height: 40px; line-height: 44px; padding: 0 8px; margin-right: 8px; background: #e6edf4; border-radius: 8px; }

/* dock */
.dock { position: absolute; left: 74px; top: 1496px; width: 2412px; height: 104px; padding: 9px 6px 0; border-radius: 12px 12px 0 0; display: flex; background: linear-gradient(90deg, #779bc9, #7599c6 20%, #7f9cbd 30%, #9ba5b8 38%, #98a3b6 45%, #819ab0 55%, #8499b4 65%, #839ba8 75%, #839bb6 88%, #999fb0); box-shadow: 0 0 2px rgba(0, 0, 0, .4), 0 0 90px rgba(0, 0, 0, .22); z-index: 3; }
.dock span { width: 86px; height: 92px; flex: none; position: relative; }
.dock span svg { width: 86px; height: 80px; filter: drop-shadow(0 2px 2px rgba(0, 0, 0, .3)); }
.dock .run::after { content: ""; display: block; width: 8px; height: 8px; border-radius: 50%; background: #10283c; margin: 3px auto 0; }
.sep { width: 2px; height: 76px; margin: 5px 17px 0 20px; background: #5f7389; flex: none; }
.dock em { position: absolute; right: 0; top: -2px; min-width: 31px; height: 31px; border-radius: 50%; background: #f9443f; color: #fff; font: 20px/31px Inter; text-align: center; letter-spacing: -.5px; }
.jb { font: 700 27px "DejaVu Sans Mono"; fill: #fff; }
.jb.pc { font: 700 29px "Open Sans"; }
.sub { font: 800 38px Inter; fill: #fb9a2c; text-anchor: middle; }
.term { font: 700 20px "DejaVu Sans Mono"; fill: #fff; }
.word { font: 700 25px "Open Sans"; fill: #fff; text-anchor: middle; }
.ps { font: 600 42px "Noto Sans"; fill: #d8f4fd; text-anchor: middle; }
```
